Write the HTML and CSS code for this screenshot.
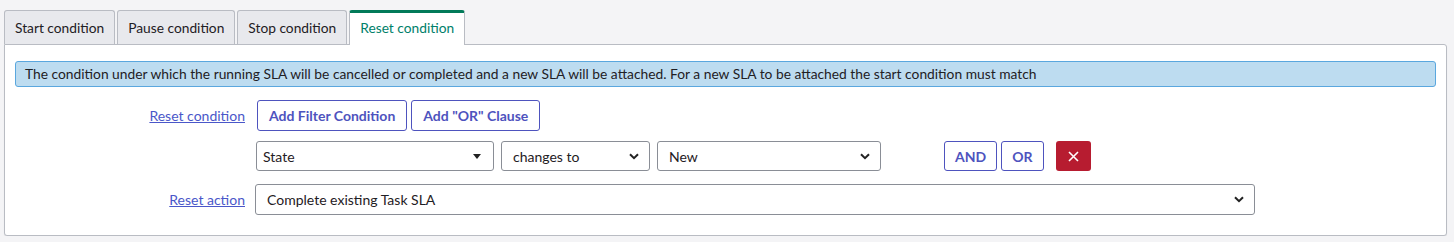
FILE: index.html
```html
<!DOCTYPE html>
<html lang="en">
<head>
  <meta charset="UTF-8">
  <title>Reset condition</title>
  <link rel="stylesheet" href="styles.css">
</head>
<body>
  <div class="tabs">
    <div class="tab">Start condition</div>
    <div class="tab">Pause condition</div>
    <div class="tab">Stop condition</div>
    <div class="tab active">Reset condition</div>
  </div>

  <section class="panel">
    <div class="info">The condition under which the running SLA will be cancelled or completed and a new SLA will be attached. For a new SLA to be attached the start condition must match</div>

    <div class="form">
      <a href="#" class="label">Reset condition</a>
      <div class="field">
        <button class="btn">Add Filter Condition</button>
        <button class="btn">Add "OR" Clause</button>
      </div>

      <span></span>
      <div class="field">
        <div class="select field-state">
          <span>State</span>
          <svg class="caret" width="8" height="5" viewBox="0 0 8 5"><path d="M0 0h8L4 5z" fill="#222"/></svg>
        </div>
        <div class="select field-op">
          <span>changes to</span>
          <svg class="chev" width="10" height="7" viewBox="0 0 10 7"><path d="M1 1.2l4 4 4-4" fill="none" stroke="#222" stroke-width="2"/></svg>
        </div>
        <div class="select field-value">
          <span>New</span>
          <svg class="chev" width="10" height="7" viewBox="0 0 10 7"><path d="M1 1.2l4 4 4-4" fill="none" stroke="#222" stroke-width="2"/></svg>
        </div>
        <div class="ops">
          <button class="btn small">AND</button>
          <button class="btn small">OR</button>
          <button class="btn-delete" aria-label="Remove">
            <svg width="11" height="11" viewBox="0 0 11 11"><path d="M1 1l9 9M10 1l-9 9" stroke="#fff" stroke-width="1.6"/></svg>
          </button>
        </div>
      </div>

      <a href="#" class="label">Reset action</a>
      <div class="field">
        <div class="select field-action">
          <span>Complete existing Task SLA</span>
          <svg class="chev" width="10" height="7" viewBox="0 0 10 7"><path d="M1 1.2l4 4 4-4" fill="none" stroke="#222" stroke-width="2"/></svg>
        </div>
      </div>
    </div>
  </section>
</body>
</html>
```

FILE: styles.css
```css
body {
  font-family: 'Lato', 'Liberation Sans', sans-serif;
  color: #1f2024;
  background: #f4f4f6;
  margin: 0;
  padding: 10px 0 0 4px;
}

.tabs {
  display: flex;
  gap: 2px;
  position: relative;
  z-index: 1;
}

.tab {
  height: 33px;
  line-height: 33px;
  padding: 0 10px;
  font-size: 13.75px;
  background: #e8e9ed;
  border: 1px solid #b9bcc3;
  border-bottom: none;
  border-radius: 3px 3px 0 0;
  color: #1f2024;
}

.tab.active {
  background: #fff;
  color: #00806a;
  border-top: 3px solid #027a59;
  height: 32px;
  line-height: 30px;
  margin-bottom: -1px;
}

.panel {
  width: 1421px;
  background: #fff;
  border: 1px solid #b9bcc3;
  border-radius: 0 3px 3px 3px;
  box-shadow: 0 1px 1px rgba(0, 0, 0, 0.08);
  padding: 16px 10px 20px 10px;
}

.info {
  background: #bddcf0;
  border: 1px solid #5aa7de;
  border-radius: 3px;
  font-size: 13.8px;
  line-height: 24px;
  padding: 0 9px;
  color: #1f2024;
}

.form {
  display: grid;
  grid-template-columns: 230px 1fr;
  column-gap: 11px;
  row-gap: 10px;
  align-items: center;
  margin-top: 13px;
}

.form > :nth-child(5),
.form > :nth-child(6) {
  margin-top: 3px;
}

.label {
  text-align: right;
  font-size: 14px;
  color: #4a57c9;
  text-decoration: underline;
}

.field {
  display: flex;
  align-items: center;
  gap: 4px;
}

.btn {
  font-family: inherit;
  font-size: 14px;
  font-weight: 700;
  color: #4e53be;
  background: #fff;
  border: 1px solid #4e53be;
  border-radius: 3px;
  height: 31px;
  padding: 0 11px;
  margin: 0;
}

.field .btn:first-child {
  margin-left: 1px;
}

.select {
  display: flex;
  align-items: center;
  justify-content: space-between;
  height: 30px;
  box-sizing: border-box;
  border: 1px solid #8a8e96;
  border-radius: 3px;
  padding: 0 10px 0 11px;
  font-size: 14px;
  background: #fff;
  color: #1f2024;
}

.field-state {
  width: 238px;
  padding-left: 6px;
  padding-right: 12px;
}

.field-op {
  width: 149px;
  margin-left: 3px;
}

.field-value {
  width: 224px;
  margin-left: 3px;
}

.field-action {
  width: 1000px;
  height: 31px;
  margin-left: -1px;
}

.ops {
  display: flex;
  align-items: center;
  gap: 4px;
  margin-left: 59px;
}

.ops .btn.small:first-child {
  margin-left: 0;
}

.btn.small {
  height: 30px;
  padding: 0 10px;
  margin: 0;
}

.btn-delete {
  width: 35px;
  height: 30px;
  margin-left: 8px;
  background: #b71c30;
  border: none;
  border-radius: 3px;
  display: flex;
  align-items: center;
  justify-content: center;
  padding: 0;
}
```
